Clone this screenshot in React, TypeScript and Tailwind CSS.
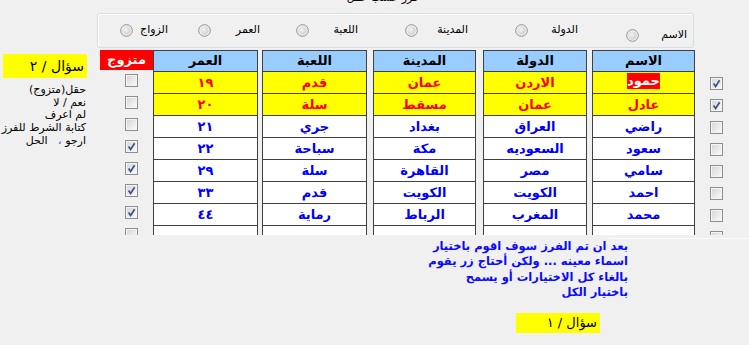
import React from "react";

type Row = {
  name: string;
  country: string;
  city: string;
  game: string;
  age: string;
  married: boolean;
  picked: boolean;
  hl?: boolean;
};

const rows: Row[] = [
  { name: "حمود", country: "الاردن", city: "عمان", game: "قدم", age: "١٩", married: false, picked: true, hl: true },
  { name: "عادل", country: "عمان", city: "مسقط", game: "سلة", age: "٢٠", married: false, picked: true, hl: true },
  { name: "راضي", country: "العراق", city: "بغداد", game: "جري", age: "٢١", married: false, picked: false },
  { name: "سعود", country: "السعوديه", city: "مكة", game: "سباحة", age: "٢٢", married: true, picked: false },
  { name: "سامي", country: "مصر", city: "القاهرة", game: "سلة", age: "٢٩", married: true, picked: false },
  { name: "احمد", country: "الكويت", city: "الكويت", game: "قدم", age: "٣٣", married: true, picked: false },
  { name: "محمد", country: "المغرب", city: "الرباط", game: "رماية", age: "٤٤", married: true, picked: false },
  { name: "", country: "", city: "", game: "", age: "", married: false, picked: false },
];

function Check({ on }: { on: boolean }) {
  return (
    <span className="flex h-[13px] w-[13px] shrink-0 items-center justify-center border border-[#8f8f8f] bg-gradient-to-br from-[#d4d4d4] to-[#fcfcfc] shadow-[inset_0_0_0_1px_#f4f4f4]">
      {on && (
        <svg viewBox="0 0 11 11" className="h-[11px] w-[11px]">
          <path d="M2.6 5.6 L4.6 8.4 L8.6 2.2" stroke="#3b4f89" strokeWidth="1.7" fill="none" />
        </svg>
      )}
    </span>
  );
}

function Radio() {
  return (
    <svg viewBox="0 0 13 13" className="h-[13px] w-[13px] shrink-0">
      <defs>
        <radialGradient id="rg" cx="0.4" cy="0.4" r="0.6">
          <stop offset="0" stopColor="#f4f4f4" />
          <stop offset="1" stopColor="#cfcfcf" />
        </radialGradient>
      </defs>
      <circle cx="6.5" cy="6.5" r="5.8" fill="#f6f6f6" stroke="#8e8e8e" strokeWidth="1" />
      <circle cx="6.5" cy="6.5" r="4.2" fill="url(#rg)" />
    </svg>
  );
}

function Col({ title, field, w }: { title: string; field: keyof Row; w: string }) {
  return (
    <div className={`flex shrink-0 flex-col border-x border-[#404040] ${w}`}>
      <div className="flex h-[22px] items-center justify-center border-t border-[#404040] bg-[#99ccff] text-[13px] font-bold text-black" dir="rtl">
        {title}
      </div>
      {rows.map((r, i) => {
        const v = r[field] as string;
        const isHl = field === "name" && i === 0;
        return (
          <div
            key={i}
            dir="rtl"
            className={
              r.hl
                ? "flex h-[22px] shrink-0 items-start justify-center border-t border-[#404040] bg-[#ffff00] pt-[1px] text-[13px] font-bold text-[#ff0000]"
                : "flex h-[22px] shrink-0 items-start justify-center border-t border-[#404040] bg-white pt-[1px] text-[13px] font-bold text-[#0000ff]"
            }
          >
            {isHl ? <span className="bg-[#ff0000] leading-[16px] text-white">{v}</span> : v}
          </div>
        );
      })}
    </div>
  );
}

export default function App() {
  return (
    <div className="h-[345px] w-[749px] overflow-hidden bg-[#f0f0f0] font-['DejaVu_Sans',sans-serif] text-black">
      {/* legend of the group box, mostly scrolled off */}
      <div className="h-[13px] overflow-hidden">
        <div className="-mt-[9px] ml-[345px] w-[75px] text-center text-[11px] leading-[14px]" dir="rtl">
          فرز حسب حقل
        </div>
      </div>

      {/* sort options */}
      <div className="ml-[97px] flex h-[35px] w-[597px] flex-row-reverse items-start rounded-[3px] border border-[#d5dfe5] pr-[6px] pt-[8px] shadow-[inset_1px_1px_0_#fff]">
        <div className="mt-[5px] flex w-[61px] shrink-0 flex-row-reverse items-center justify-between">
          <span className="text-[11px]">الاسم</span>
          <Radio />
        </div>
        <div className="mr-[48px] flex w-[63px] shrink-0 flex-row-reverse items-center justify-between">
          <span className="text-[11px]">الدولة</span>
          <Radio />
        </div>
        <div className="mr-[47px] flex w-[63px] shrink-0 flex-row-reverse items-center justify-between">
          <span className="text-[11px]">المدينة</span>
          <Radio />
        </div>
        <div className="mr-[47px] flex w-[62px] shrink-0 flex-row-reverse items-center justify-between">
          <span className="text-[11px]">اللعبة</span>
          <Radio />
        </div>
        <div className="mr-[36px] flex w-[62px] shrink-0 flex-row-reverse items-center justify-between">
          <span className="text-[11px]">العمر</span>
          <Radio />
        </div>
        <div className="mr-[30px] flex w-[48px] shrink-0 flex-row-reverse items-center justify-between">
          <span className="text-[11px]">الزواج</span>
          <Radio />
        </div>
      </div>

      {/* main area */}
      <div className="mt-[2px] flex h-[185px] overflow-hidden">
        <div className="w-[100px] shrink-0 pt-[4px]">
          <div className="ml-[3px] flex h-[24px] w-[84px] items-center bg-[#ffff00] pr-[3px] text-[14px]" dir="rtl">
            سؤال / ٢
          </div>
          <div className="mt-[6px] w-[86px] whitespace-nowrap text-right text-[11px] leading-[12.7px]" dir="rtl">
            <div>حقل(متزوج)</div>
            <div>نعم / لا</div>
            <div>لم اعرف</div>
            <div>كتابة الشرط للفرز</div>
            <div>
              ارجو <span className="text-[#3344ff]">،</span>&nbsp;&nbsp; الحل
            </div>
          </div>
        </div>

        <div className="flex w-[53px] shrink-0 flex-col">
          <div className="flex h-[22px] items-center justify-center bg-[#ff0000] text-[13px] font-bold text-white" dir="rtl">
            متزوج
          </div>
          {rows.map((r, i) => (
            <div key={i} className="flex h-[22px] shrink-0 items-center pl-[25px]">
              <Check on={r.married} />
            </div>
          ))}
        </div>
        <Col title="العمر" field="age" w="w-[105px]" />
        <div className="w-[4px] shrink-0" />
        <Col title="اللعبة" field="game" w="w-[105px]" />
        <div className="w-[6px] shrink-0" />
        <Col title="المدينة" field="city" w="w-[103px]" />
        <div className="w-[7px] shrink-0" />
        <Col title="الدولة" field="country" w="w-[104px]" />
        <div className="w-[5px] shrink-0" />
        <Col title="الاسم" field="name" w="w-[103px]" />

        <div className="ml-[15px] flex flex-col pt-[22px]">
          {rows.map((r, i) => (
            <div key={i} className="flex h-[22px] shrink-0 items-center">
              <Check on={r.picked} />
            </div>
          ))}
        </div>
      </div>

      <div className="mt-[3px] ml-[609px] h-[1px] w-[140px] bg-[#fbfbfb]" />

      {/* question text */}
      <div className="ml-[440px] w-[188px] text-right text-[11.5px] font-bold leading-[15.3px] text-[#0a0aff]" dir="rtl">
        <div className="whitespace-nowrap">بعد ان تم الفرز سوف اقوم باختيار</div>
        <div className="whitespace-nowrap">اسماء معينه ... ولكن أحتاج زر يقوم</div>
        <div className="whitespace-nowrap">بالغاء كل الاختيارات أو يسمح</div>
        <div className="whitespace-nowrap">باختيار الكل</div>
      </div>
      <div className="ml-[516px] mt-[13px] flex h-[20px] w-[84px] items-center bg-[#ffff00] pr-[3px] text-[13px]" dir="rtl">
        سؤال / ١
      </div>
    </div>
  );
}
